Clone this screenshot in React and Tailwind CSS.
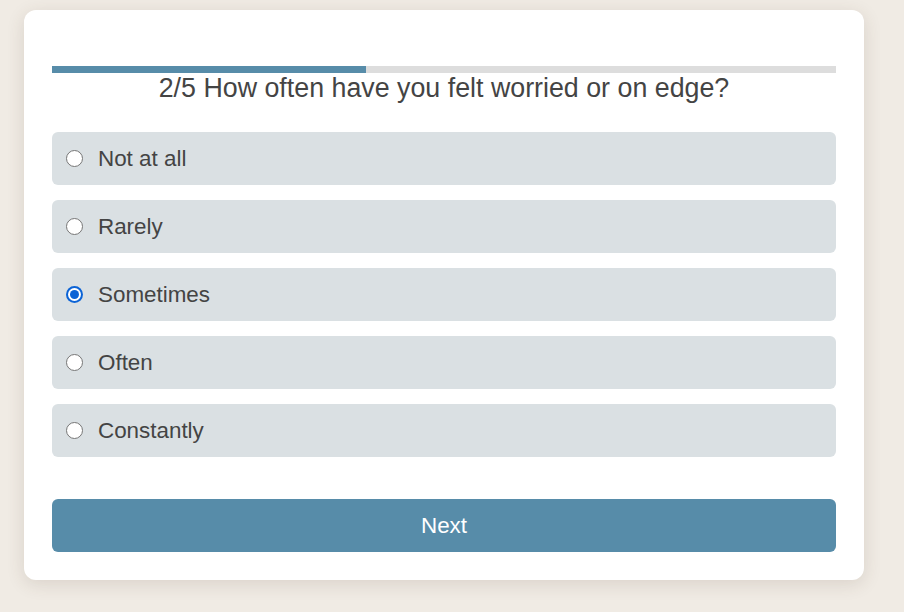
import React, { useState } from 'react';

const options = ['Not at all', 'Rarely', 'Sometimes', 'Often', 'Constantly'];

const Radio = ({ checked }) =>
  checked ? (
    <span className="w-[17px] h-[17px] rounded-full bg-[#0b63d6] flex items-center justify-center shrink-0">
      <span className="w-[13px] h-[13px] rounded-full bg-white flex items-center justify-center">
        <span className="w-[9px] h-[9px] rounded-full bg-[#0b63d6]" />
      </span>
    </span>
  ) : (
    <span className="w-[17px] h-[17px] rounded-full bg-white border border-[#767676] shrink-0" />
  );

const App = () => {
  const [selected, setSelected] = useState('Sometimes');

  return (
    <div className="min-h-[612px] w-[904px] bg-[#f0ebe4] pt-[10px] pl-[24px] font-['Liberation_Sans',Arial,sans-serif] text-[#444]">
      <div className="w-[840px] bg-white rounded-[12px] shadow-[0_4px_18px_rgba(80,60,40,0.14)] px-[28px] pt-[56px] pb-[28px]">
        {/* progress */}
        <div className="h-[7px] bg-[#dddddd]">
          <div className="h-full bg-[#578ca9]" style={{ width: '40%' }} />
        </div>
        <h2 className="text-center text-[26.8px] leading-[30px]">
          2/5 How often have you felt worried or on edge?
        </h2>

        <div className="mt-[29px] flex flex-col gap-[15px]">
          {options.map(opt => (
            <label
              key={opt}
              onClick={() => setSelected(opt)}
              className="h-[53px] bg-[#dae0e3] rounded-[6px] flex items-center pl-[14px] gap-[15px] cursor-pointer"
            >
              <Radio checked={selected === opt} />
              <span className="text-[22.4px]">{opt}</span>
            </label>
          ))}
        </div>

        <button className="mt-[42px] w-full h-[53px] bg-[#578ca9] rounded-[6px] text-white text-[22.4px]">
          Next
        </button>
      </div>
    </div>
  );
};

export default App;
